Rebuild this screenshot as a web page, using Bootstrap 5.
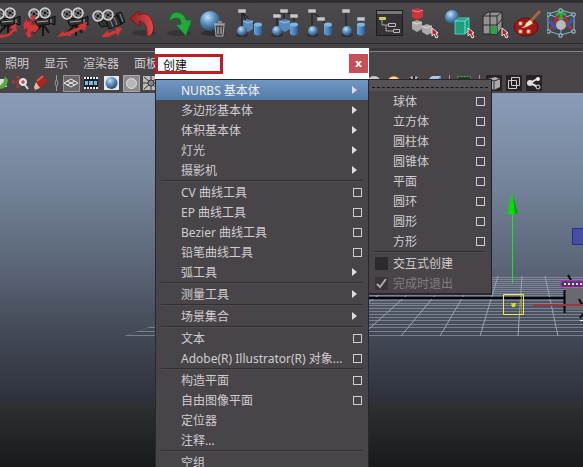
<!DOCTYPE html>
<html lang="zh-CN">
<head>
<meta charset="utf-8">
<meta name="viewport" content="width=device-width, initial-scale=1">
<title>创建</title>
<link href="https://cdn.jsdelivr.net/npm/bootstrap@5.3.0/dist/css/bootstrap.min.css" rel="stylesheet">
<style>
body{font:12px/20px "Noto Sans","Noto Sans CJK SC",sans-serif;color:#d0cdd0;background:#484448}
button{font:inherit;color:inherit;background:none;border:0;padding:0}
svg{display:block;flex:none}
.shelf{height:44px;border-top:3px solid #302e30;border-bottom:1px solid #2c2a2c;padding-top:2px;background:linear-gradient(#4d4a4d,#434043)}
.shelf-set{margin-left:-13px}
.shelf-set button{width:35px}
.divider-strip{height:8px;background:#464346;border-bottom:1px solid #858285;box-shadow:inset 0 -3px #3a383a}
.panel-menu{height:21px;gap:15px;padding:2px 0 0 5px}
.panel-tools{height:20px;margin-left:-9px}
.panel-tools button{width:20px;display:flex;justify-content:center}
.panel-tools .rule{width:10px;flex:none;display:flex;justify-content:center}
.tools-gap{width:203px}
.view3d{background:linear-gradient(#8b9cb8 0,#74849a 24%,#5b6678 46%,#434956 64%,#30333f 81%,#2c2f31 84%,#171b1d 100%)}
.torn-menu{left:155px;top:48px;width:214px}
.torn-title{height:31px;background:#fff;color:#111}
.torn-title h1{font:inherit;line-height:17px;margin:0;width:68px;padding:0 5px;border:3px solid #b82023;height:20px}
.torn-close{width:19px;height:19px;background:#c75058;color:#fff;font:bold 11px/17px "DejaVu Sans",sans-serif;margin-right:1px}
.menu-face{background:#484448;border:1px solid #29272b;color:#d0cdd0}
.menu-row{height:20px;padding:0 6px 0 25px}
.menu-row>button:first-child{line-height:20px;padding-top:2px;text-align:left;flex:1;white-space:nowrap}
.menu-row.current{background:linear-gradient(#7096c1,#557ba8);color:#f2f2f2}
.opt-box{width:9px;height:9px;border:1px solid #d0cdd0!important;flex:none}
.go{width:0;height:0;border:4px solid transparent;border-left:5px solid #dedbde;border-right:0;margin-right:5px}
.menu-rule{height:2px;margin:0 6px 0 5px;border-top:1px solid #302e31;border-bottom:1px solid #524e52}
.sub-menu{left:213px;top:31px;width:124px;border-right-color:#202225;border-bottom-width:2px}
.tear{height:11px;background:#555255;padding:4px 3px 0;display:block;width:100%}
.tear span{display:block;border-top:1px dashed #151515}
.sub-menu .menu-row{padding-left:24px}
.check-row{height:20px;padding-left:6px}
.check-row input{appearance:none;width:13px;height:13px;background:#2c2a2d;margin:0 5px 0 0;border:0;border-radius:0}
.check-row input:checked{background:#373538 url("data:image/svg+xml,%3Csvg xmlns='http://www.w3.org/2000/svg' viewBox='0 0 13 13'%3E%3Cpath d='M2 7l3 3 6-8' fill='none' stroke='%23aaa' stroke-width='2'/%3E%3C/svg%3E")}
.check-row label{padding-top:2px}
.dim{color:#817e81}
</style>
<script src="https://cdn.jsdelivr.net/npm/bootstrap@5.3.0/dist/js/bootstrap.bundle.min.js"></script>
</head>
<body class="vh-100 overflow-hidden d-flex flex-column position-relative">
<svg width="0" height="0" class="position-absolute" aria-hidden="true">
 <defs>
  <radialGradient id="ball" cx=".38" cy=".3" r=".7"><stop stop-color="#c4e2f6"/><stop offset=".45" stop-color="#6397c8"/><stop offset="1" stop-color="#2a4b73"/></radialGradient>
  <linearGradient id="tube"><stop stop-color="#6ba0d5"/><stop offset=".5" stop-color="#4c85bf"/><stop offset="1" stop-color="#2b588a"/></linearGradient>
  <linearGradient id="redg" x2="1"><stop stop-color="#8c1e22"/><stop offset="1" stop-color="#e04a4a"/></linearGradient>
  <symbol id="reel" viewBox="0 0 12 12"><circle cx="6" cy="6" r="5" fill="#77797a" stroke="#d6d6d6" stroke-width="1.500"/><circle cx="6" cy="6" r="1.500" fill="#161616"/><path d="M3 4l1 1M8 3l1 2M4 8l1 1M8 8l1-1" stroke="#262626" stroke-width="1.500"/></symbol>
  <symbol id="cam" viewBox="0 0 35 35"><path d="M21 19l-9 9M21 19l6 9M21 19v12" stroke="#151515" stroke-width="2"/><path d="M12 14l16-1v6l-13 2zM27 14l6-3v9l-6-2" fill="#2c2e30" stroke="#0d0d0d"/><path d="M15 17l11-1M29 14v4" stroke="#aaa"/><use href="#reel" x="6" y="3" width="12" height="12"/><use href="#reel" x="17" y="2" width="12" height="12"/></symbol>
  <symbol id="sph" viewBox="0 0 12 12"><ellipse cx="6" cy="10" rx="6" ry="2" fill="#2e2c2e"/><circle cx="6" cy="6" r="5" fill="url(#ball)"/></symbol>
  <symbol id="cyl" viewBox="0 0 10 15"><path d="M1 2v10q4 3 8 0V2" fill="url(#tube)"/><ellipse cx="5" cy="2.500" rx="4" ry="2" fill="#83b5e0"/></symbol>
  <symbol id="tag" viewBox="0 0 8 4"><path d="M0 0h8v4H0z" fill="#c6c6c8" stroke="#858588"/></symbol>
  <symbol id="cur" viewBox="0 0 8 12"><path d="M1 1v8l2-2 2 4 2-1-2-4h2z" fill="#b51c22" stroke="#eee"/></symbol>
 </defs>
</svg>

<header>
 <div class="shelf"><div class="shelf-set d-flex">
  <button aria-label="环绕相机"><svg width="35" height="35"><use href="#cam"/><path d="M8 29q14 3 17-5l-3-1 7-5 1 9-2-1q-7 9-20 6z" fill="#d03539"/></svg></button>
  <button aria-label="平移相机"><svg width="35" height="35"><use href="#cam"/><path d="M13 10v6l-2-1-2 4 3 1 1-2 4 5-4 5-2-2-2 1v3l2 1-5 2-3-6h2v-4l-3 2-1-6 4-5 1 3 3-1 1-3-2-1z" fill="#d2363a" stroke="#8e2023" stroke-width=".5"/></svg></button>
  <button aria-label="推拉相机"><svg width="35" height="35"><use href="#cam" x="-2"/><path d="M0 32l6-6 1 2 15-6-1-2 9-3-2 9-3-2-14 7h3v-1z" fill="#cf3438"/></svg></button>
  <button aria-label="缩放相机"><svg width="35" height="35"><path d="M6 17l8-2 2 6-7 1zM14 15l12-5 4 9-13 5zM24 9l5-2 4 10-4 2z" fill="#303234" stroke="#111"/><path d="M18 14l3 8M22 12l3 8M28 9l3 8" stroke="#888"/><use href="#reel" y="5" width="12" height="12"/><use href="#reel" x="10" y="4" width="12" height="12"/><path d="M9 32l7-7v3l8-3v-3l6 1-4 8-2-3-8 4z" fill="#d2363a"/></svg></button>
  <button aria-label="撤消"><svg width="35" height="35"><ellipse cx="17" cy="28" rx="12" ry="3" fill="#363436"/><path d="M2 14l10-8-1 4q11-5 15 8 2 9-3 13-4 1-3-3 0-11-8-12l1 5z" fill="url(#redg)" stroke="#761719"/></svg></button>
  <button aria-label="重做"><svg width="35" height="35"><ellipse cx="17" cy="28" rx="12" ry="3" fill="#363436"/><path d="M7 16Q9 4 19 8q5 3 5 7h6l-6 16-10-11 5-1q0-10-12-3z" fill="#26a63d" stroke="#0f6e22"/></svg></button>
  <button aria-label="删除历史"><svg width="35" height="35"><ellipse cx="16" cy="28" rx="12" ry="3" fill="#302e30"/><circle cx="13" cy="16" r="10" fill="url(#ball)"/><path d="M18 20h9l-1 11h-7z" fill="#444" stroke="#aaa"/><path d="M17 19h11M21 17h4M21 22v7M24 22v7" stroke="#c4c4c4"/></svg></button>
  <button aria-label="选择层级"><svg width="35" height="35"><path d="M10 6v22M10 7l14 14M10 7l6 12" stroke="#171717"/><use href="#tag" x="6" y="4" width="8" height="4"/><path d="M11 16l5-2 5 2v8l-5 3-5-3z" fill="#5689bc"/><path d="M11 16l5 2 5-2" fill="none" stroke="#9cc4e7"/><use href="#sph" x="4" y="20" width="12" height="12"/><use href="#cyl" x="21" y="17" width="10" height="15"/></svg></button>
  <button aria-label="选择对象"><svg width="35" height="35"><path d="M10 11v15M17 6v16M27 11v9M17 7l-7 3M17 7l9 3" stroke="#171717"/><use href="#tag" x="13" y="4" width="8" height="4"/><use href="#tag" x="6" y="9" width="8" height="4"/><use href="#tag" x="23" y="9" width="8" height="4"/><path d="M12 16l6-2 5 2v8l-5 3-6-3z" fill="#5689bc"/><path d="M12 16l6 2 5-2" fill="none" stroke="#9cc4e7"/><use href="#sph" x="4" y="20" width="12" height="12"/><use href="#cyl" x="22" y="17" width="10" height="15"/></svg></button>
  <button aria-label="建立父子关系"><svg width="35" height="35"><path d="M10 6v18M10 7l10 7 5 7" stroke="#171717" fill="none"/><use href="#tag" x="6" y="4" width="8" height="4"/><use href="#tag" x="15" y="12" width="8" height="4"/><use href="#sph" x="5" y="20" width="12" height="12"/><use href="#cyl" x="21" y="17" width="10" height="15"/></svg></button>
  <button aria-label="取消父子关系"><svg width="35" height="35"><path d="M9 6v18M24 14v8" stroke="#171717"/><use href="#tag" x="5" y="4" width="8" height="4"/><use href="#tag" x="20" y="12" width="8" height="4"/><use href="#sph" x="4" y="20" width="12" height="12"/><use href="#cyl" x="19" y="17" width="10" height="15"/></svg></button>
  <button aria-label="大纲视图"><svg width="35" height="35"><path d="M4.500 5.500h26v25h-26z" fill="#353335" stroke="#1d1c1d"/><path d="M5 6h25v3H5z" fill="#777"/><path d="M10 15v5h4v6h8M14 20h8" stroke="#aaa" fill="none"/><path d="M7.500 12.500h6v2h-6z" fill="#b8b75d" stroke="#ddd66a"/><path d="M16.500 18.500h7v3h-7zM21.500 24.500h6v3h-6z" fill="#353335" stroke="#bbb"/></svg></button>
  <button aria-label="按层级选择"><svg width="35" height="35"><path d="M10 10v14h12" stroke="#171717" fill="none"/><path d="M5 5l5-2 6 2v7l-6 3-5-3z" fill="#cc3439"/><path d="M5 5l5 2 6-2" stroke="#f1898a" fill="none"/><path d="M5 17l5-2 5 2v7l-5 3-5-3zM15 21l5-2 5 2v7l-5 2-5-3z" fill="#aaa"/><path d="M5 17l5 2 5-2M15 21l5 2 5-2" stroke="#ddd" fill="none"/><use href="#cur" x="24" y="22" width="8" height="12"/></svg></button>
  <button aria-label="按对象选择"><svg width="35" height="35"><circle cx="10" cy="12" r="7" fill="url(#ball)"/><path d="M13 16l4-3h10v12l-4 4H13z" fill="#1e9c80" stroke="#49d3b2"/><path d="M13 16h10v13M23 16l4-3" stroke="#73e6c8" fill="none"/><use href="#cur" x="25" y="22" width="8" height="12"/></svg></button>
  <button aria-label="按组件选择"><svg width="35" height="35"><path d="M6 11l5-4h14v16l-5 6H6z" fill="#929292" stroke="#222"/><path d="M6 11h14v18M20 11l5-4M13 7v22M6 20h14l5-6" stroke="#282828" fill="none"/><path d="M14 21h6v8h-6z" fill="#29a642"/><use href="#cur" x="24" y="22" width="8" height="12"/></svg></button>
  <button aria-label="绘制选择"><svg width="35" height="35"><ellipse cx="14" cy="22" rx="12" ry="9" fill="#9f171a" stroke="#5d1013"/><path d="M28 6L18 17" stroke="#a66741" stroke-width="3"/><path d="M18 15l3 3q-6 5-12 5 4-1 5-5z" fill="#eee0b6"/><g fill="#fff" stroke="#d18b4e"><path d="M7 17h3v3H7zM7 25h3v3H7zM15 25h3v3h-3z"/></g></svg></button>
  <button aria-label="变形晶格"><svg width="35" height="35"><g transform="translate(-3 0)"><path d="M4 9L17 5l13 4v17l-13 4-13-4zM17 5v25M4 9l13 5 13-5" fill="none" stroke="#8cb6ca"/><path d="M17 6v10M12 11l5-6 5 6" stroke="#30a845" stroke-width="3" fill="none"/><path d="M7 24l7-13M27 24l-7-13" stroke="#b62b31" stroke-width="3"/><path d="M5 15l7 9M29 13l-6 9" stroke="#315cad" stroke-width="3"/><circle cx="17" cy="20" r="5" fill="#b9b9b9"/><g fill="#233" stroke="#9ad5e9"><path d="M3 8h3v3H3zM15 4h3v3h-3zM28 8h3v3h-3zM3 25h3v3H3zM15 29h3v3h-3zM28 25h3v3h-3z"/></g></g></svg></button>
 </div></div>
 <div class="divider-strip"></div>
 <nav class="panel-menu d-flex align-items-center"><button>照明</button><button>显示</button><button>渲染器</button><button>面板</button></nav>
 <div class="panel-tools d-flex align-items-center">
  <button aria-label="图像平面"><svg width="16" height="16"><path d="M1 4h10l3 8H3z" fill="#ddd"/><path d="M5 11q6-1 7-10l3 4q-1 8-7 9z" fill="#56ad39"/></svg></button>
  <button aria-label="二维平移缩放"><svg width="18" height="16"><path d="M6 1v12M0 7h12M4 3l2-2 2 2M4 11l2 2 2-2M2 5L0 7l2 2" stroke="#c9322e" fill="none"/><circle cx="11" cy="7" r="3.500" fill="#ddd" stroke="#eee"/><path d="M9 7h4M11 5v4" stroke="#b22"/><path d="M13 10l3 4" stroke="#ddd" stroke-width="2"/></svg></button>
  <button aria-label="油性铅笔"><svg width="16" height="16"><path d="M3 7l7-6 5 6-8 6z" fill="#a92521"/><path d="M4 6l6-5" stroke="#df5a50" stroke-width="2"/><path d="M3 7l4 6-5 2-1-3z" fill="#e5b89b"/></svg></button>
  <span class="rule"><svg width="5" height="16"><path d="M2.500 0v4q-3 4 0 8v4M2.500 4q3 4 0 8" stroke="#9a979a" fill="none"/></svg></span>
  <button aria-label="栅格"><svg width="17" height="17"><path d="M.5.5h16v16H.5z" fill="#6a676a" stroke="#999"/><path d="M1 8l7-4 7 4-7 4zM4 6l8 4M12 6l-8 4" fill="none" stroke="#eee"/></svg></button>
  <button aria-label="胶片门"><svg width="16" height="16"><path d="M1 2h14v12H1z" fill="#15212b"/><path d="M1 3h14M1 13h14" stroke="#eee" stroke-width="2" stroke-dasharray="2 1"/><path d="M2 6h3v4H2zM6 6h4v4H6zM11 6h3v4h-3z" fill="#7fb6dc"/></svg></button>
  <button aria-label="分辨率门"><svg width="15" height="16"><path d="M0 1h15v14H0z" fill="#e8e8e8"/><circle cx="7.500" cy="8" r="6" fill="url(#ball)"/></svg></button>
  <button aria-label="门遮罩"><svg width="17" height="17"><path d="M.5.5h16v16H.5z" fill="#8c898c" stroke="#aaa"/><circle cx="8.500" cy="8.500" r="5" fill="#b7b7b7" stroke="#ddd"/></svg></button>
  <button aria-label="区域图"><svg width="16" height="16"><path d="M0 1h16v14H0z" fill="#bbb"/><path d="M1 2l14 12M15 2L1 14M8 1v14M0 8h16" stroke="#333"/><circle cx="8" cy="8" r="3" fill="#888" stroke="#333"/></svg></button>
  <span class="tools-gap flex-shrink-0"></span>
  <button aria-label="平滑着色"><svg width="16" height="16"><circle cx="8" cy="8" r="7" fill="#ccc"/></svg></button>
  <button aria-label="使用灯光"><svg width="16" height="16"><circle cx="8" cy="8" r="7" fill="#cf8b2b"/><path d="M3 5q4-4 8-1" stroke="#ffe19d" stroke-width="2" fill="none"/></svg></button>
  <button aria-label="阴影"><svg width="16" height="16"><circle cx="8" cy="8" r="7" fill="#aaa"/><path d="M8 1v14M4 3v10M12 3v4" stroke="#222" stroke-width="2"/></svg></button>
  <button aria-label="纹理"><svg width="16" height="16"><path d="M2 5l4-4h9v10l-4 4H2z" fill="#4f83bc"/><path d="M2 5l4-4h9l-4 4z" fill="#a9c8e7"/></svg></button>
  <span class="rule"><svg width="5" height="16"><path d="M2.500 0v16" stroke="#999"/></svg></span>
  <button aria-label="隔离选择"><svg width="16" height="16"><path d="M1.500 1.500h13v13h-13z" fill="#28382b" stroke="#4daf58" stroke-dasharray="2 1"/></svg></button>
  <span class="rule"><svg width="5" height="16"><path d="M2.500 0v16" stroke="#999"/></svg></span>
  <button aria-label="X 射线显示"><svg width="16" height="16"><path d="M0 0h16v16H0z" fill="#252325"/><path d="M2 4l7-2 5 2v8l-6 3-6-3z" fill="#aaa"/><path d="M2 4l6 2 6-2M8 6v9" stroke="#333" fill="none"/></svg></button>
  <button aria-label="重叠显示"><svg width="16" height="16"><path d="M0 0h16v16H0z" fill="#252325"/><path d="M2.500 5.500h8v8h-8zM5.500 2.500h8v8h-8z" fill="none" stroke="#ccc"/></svg></button>
  <button aria-label="关节显示"><svg width="16" height="16"><path d="M0 0h16v16H0z" fill="#252325"/><path d="M13 3L4 8l8 4" stroke="#ddd" stroke-width="2" fill="none"/><circle cx="12" cy="4" r="2" fill="#eee"/><circle cx="4" cy="8" r="3" fill="#ddd"/><circle cx="12" cy="12" r="2" fill="#252325" stroke="#ddd"/></svg></button>
 </div>
</header>

<main class="view3d flex-grow-1 overflow-hidden position-relative">
 <svg class="position-absolute w-100 h-100" viewBox="0 93 583 374" preserveAspectRatio="xMidYMid slice" role="img" aria-label="透视视图">
  <clipPath id="floor"><path d="M122 337L293 275H583V337z"/></clipPath>
  <g clip-path="url(#floor)" stroke="#9ca4b1" fill="none">
   <path d="M0 335.500H583M0 331.500H583M0 327.500H583M0 324.500H583M0 320.500H583M0 317.500H583M0 314.500H583M0 311.500H583M0 308.500H583M0 305.500H583M0 303.500H583M0 300.500H583M0 295.500H583M0 293.500H583M0 291.500H583M0 289.500H583M0 287.500H583M0 285.500H583M0 283.500H583M0 281.500H583M0 279.500H583M0 277.500H583" stroke-opacity=".6"/>
   <path d="M123 336L290 276M164 336L313 276M203 336L336 276M243 336L359 276M283 336L382 276M322 336L405 276M361 336L428 276M401 336L451 276M440 336L475 276M480 336L498 276M518 336L522 276M558 336L545 276M597 336L569 276"/>
  </g>
  <path d="M566 288h17v22h-17z" fill="#6b6970"/>
  <path d="M368 298h197M564.500 290v23" stroke="#050505" stroke-width="2" fill="none"/>
  <path d="M561 281h22v6h-22z" fill="#4c365c" stroke="#ed16e9" stroke-dasharray="4 2"/><path d="M564 284h19" stroke="#ead6fa" stroke-width="2" stroke-dasharray="2 2"/>
  <path d="M568 275l3 5M579 299l2 4 2 1M580 318l3-4" stroke="#080808" stroke-width="2" fill="none"/><path d="M580 320.500h3" stroke="#fff"/>
  <path d="M572.500 228.500h11v16h-11z" fill="#474ea2" stroke="#252c99"/>
  <path d="M512.500 213v70" stroke="#28dc38"/><path d="M507 213l5-20 5 20-5 2z" fill="#09d90b"/><path d="M513 196l5 17-3 1z" fill="#0b9c16"/>
  <path d="M524 305h10" stroke="#59606b"/><path d="M533 305h50" stroke="#963840" stroke-width="2"/>
  <path d="M503.500 294.500h20v20h-20z" fill="none" stroke="#f1ed47"/><path d="M521.500 295v19" stroke="#8b9e28"/><path d="M511 303h5l-1 4h-3z" fill="#d6dd32"/>
 </svg>
</main>

<section class="torn-menu position-absolute" aria-label="创建菜单">
 <div class="torn-title d-flex align-items-center justify-content-between"><h1>创建</h1><button class="torn-close" aria-label="关闭">x</button></div>
 <div class="menu-face">
  <div class="menu-row d-flex align-items-center current"><button>NURBS 基本体</button><i class="go"></i></div>
  <div class="menu-row d-flex align-items-center"><button>多边形基本体</button><i class="go"></i></div>
  <div class="menu-row d-flex align-items-center"><button>体积基本体</button><i class="go"></i></div>
  <div class="menu-row d-flex align-items-center"><button>灯光</button><i class="go"></i></div>
  <div class="menu-row d-flex align-items-center"><button>摄影机</button><i class="go"></i></div>
  <div class="menu-rule"></div>
  <div class="menu-row d-flex align-items-center"><button>CV 曲线工具</button><button class="opt-box" aria-label="选项"></button></div>
  <div class="menu-row d-flex align-items-center"><button>EP 曲线工具</button><button class="opt-box" aria-label="选项"></button></div>
  <div class="menu-row d-flex align-items-center"><button>Bezier 曲线工具</button><button class="opt-box" aria-label="选项"></button></div>
  <div class="menu-row d-flex align-items-center"><button>铅笔曲线工具</button><button class="opt-box" aria-label="选项"></button></div>
  <div class="menu-row d-flex align-items-center"><button>弧工具</button><i class="go"></i></div>
  <div class="menu-rule"></div>
  <div class="menu-row d-flex align-items-center"><button>测量工具</button><i class="go"></i></div>
  <div class="menu-rule"></div>
  <div class="menu-row d-flex align-items-center"><button>场景集合</button><i class="go"></i></div>
  <div class="menu-rule"></div>
  <div class="menu-row d-flex align-items-center"><button>文本</button><button class="opt-box" aria-label="选项"></button></div>
  <div class="menu-row d-flex align-items-center"><button>Adobe(R) Illustrator(R) 对象...</button><button class="opt-box" aria-label="选项"></button></div>
  <div class="menu-rule"></div>
  <div class="menu-row d-flex align-items-center"><button>构造平面</button><button class="opt-box" aria-label="选项"></button></div>
  <div class="menu-row d-flex align-items-center"><button>自由图像平面</button><button class="opt-box" aria-label="选项"></button></div>
  <div class="menu-row d-flex align-items-center"><button>定位器</button></div>
  <div class="menu-row d-flex align-items-center"><button>注释...</button></div>
  <div class="menu-rule"></div>
  <div class="menu-row d-flex align-items-center"><button>空组</button></div>
 </div>
 <div class="menu-face sub-menu position-absolute">
  <button class="tear" aria-label="分离菜单"><span></span></button>
  <div class="menu-row d-flex align-items-center"><button>球体</button><button class="opt-box" aria-label="选项"></button></div>
  <div class="menu-row d-flex align-items-center"><button>立方体</button><button class="opt-box" aria-label="选项"></button></div>
  <div class="menu-row d-flex align-items-center"><button>圆柱体</button><button class="opt-box" aria-label="选项"></button></div>
  <div class="menu-row d-flex align-items-center"><button>圆锥体</button><button class="opt-box" aria-label="选项"></button></div>
  <div class="menu-row d-flex align-items-center"><button>平面</button><button class="opt-box" aria-label="选项"></button></div>
  <div class="menu-row d-flex align-items-center"><button>圆环</button><button class="opt-box" aria-label="选项"></button></div>
  <div class="menu-row d-flex align-items-center"><button>圆形</button><button class="opt-box" aria-label="选项"></button></div>
  <div class="menu-row d-flex align-items-center"><button>方形</button><button class="opt-box" aria-label="选项"></button></div>
  <div class="menu-rule"></div>
  <div class="check-row d-flex align-items-center"><input type="checkbox" id="interactive"><label for="interactive">交互式创建</label></div>
  <div class="check-row d-flex align-items-center dim"><input type="checkbox" id="exit" checked disabled><label for="exit">完成时退出</label></div>
 </div>
</section>
</body>
</html>
